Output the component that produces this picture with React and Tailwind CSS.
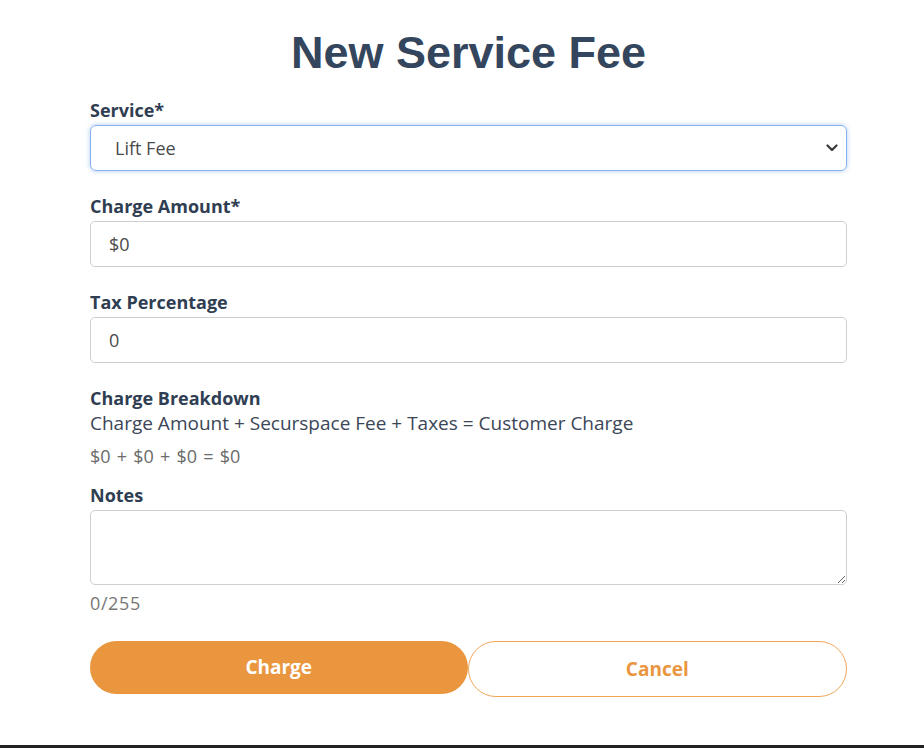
export default function App() {
  const font = { fontFamily: '"Open Sans", "Noto Sans", sans-serif' };
  const label = "block text-[18px] leading-[18px] font-bold text-[#2f3e52] mb-[6px]";
  return (
    <div className="w-[924px] h-[748px] bg-white flex flex-col" style={font}>
      <div className="flex-1 px-[90px] pt-[27px] box-content" style={{ width: 757 }}>
        <h1
          className="text-center text-[45px] leading-[52px] font-bold text-[#34465d] mb-[22px]"
          style={{ fontFamily: '"Liberation Sans", Arial, sans-serif' }}
        >
          New Service Fee
        </h1>

        <label className={label}>Service*</label>
        <div className="relative h-[46px] rounded-[6px] border border-[#86b3ee] shadow-[0_0_5px_rgba(110,160,235,0.55)] flex items-center pl-[24px] text-[18px] text-[#4a4a4a]">
          Lift Fee
          <svg className="absolute right-[8px] top-1/2 -translate-y-1/2" width="12" height="8" viewBox="0 0 12 8" fill="none">
            <path d="M1.5 1.5 L6 6 L10.5 1.5" stroke="#3a3a3a" strokeWidth="2.2" strokeLinecap="round" strokeLinejoin="round" />
          </svg>
        </div>

        <label className={"mt-[26px] " + label}>Charge Amount*</label>
        <div className="h-[46px] rounded-[5px] border border-[#cfcfcf] flex items-center pl-[18px] text-[18px] text-[#4a4a4a]">
          $0
        </div>

        <label className={"mt-[26px] " + label}>Tax Percentage</label>
        <div className="h-[46px] rounded-[5px] border border-[#cfcfcf] flex items-center pl-[18px] text-[18px] text-[#4a4a4a]">
          0
        </div>

        <div className="mt-[26px] text-[18px] leading-[18px] font-bold text-[#2f3e52] mb-[2px]">Charge Breakdown</div>
        <div className="mt-[4px] text-[19px] leading-[24px] text-[#3b4657]">
          Charge Amount + Securspace Fee + Taxes = Customer Charge
        </div>
        <div className="mt-[9px] text-[18px] leading-[24px] text-[#6b6b6b] [word-spacing:1.5px]">$0 + $0 + $0 = $0</div>

        <label className="mt-[18px] text-[18px] leading-[18px] font-bold text-[#2f3e52] mb-[6px] block">Notes</label>
        <textarea className="block w-full h-[75px] rounded-[5px] border border-[#cfcfcf] outline-none" />
        <div className="mt-[6px] text-[18px] leading-[24px] text-[#777777] tracking-[0.6px]">0/255</div>

        <div className="mt-[26px] flex items-start">
          <button className="flex-1 h-[53px] rounded-full bg-[#e9963e] text-white text-[19px] font-bold">
            Charge
          </button>
          <button className="flex-1 h-[56px] rounded-full border-[1.5px] border-[#efa658] bg-white text-[#ea9640] text-[19px] font-bold">
            Cancel
          </button>
        </div>
      </div>
      <div className="h-[3px] bg-[#222222]" />
    </div>
  );
}
